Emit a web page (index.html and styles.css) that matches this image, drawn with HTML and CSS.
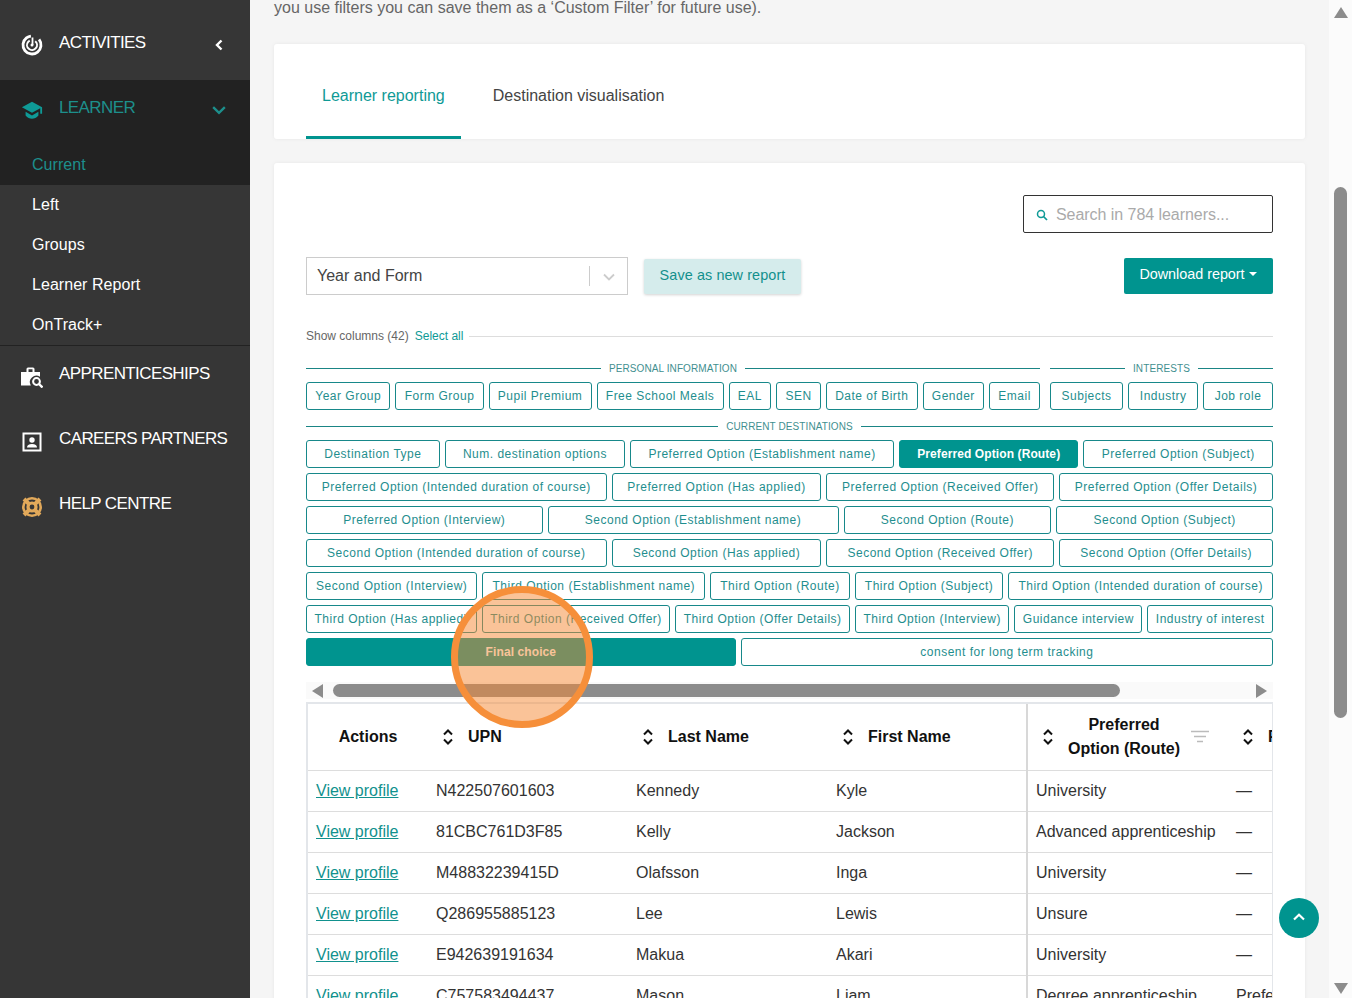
FILE: index.html
```html
<!DOCTYPE html>
<html lang="en">
<head>
    <meta charset="UTF-8">
    <meta name="viewport" content="width=device-width, initial-scale=1.0">
    <title>Learner reporting</title>
    <link rel="stylesheet" href="styles.css">
</head>
<body>
    <div class="app">
        <nav class="sidebar">
            <a class="nav-item first">
                <svg class="nav-icon" viewBox="0 0 22 22"><circle cx="11" cy="11" r="9" fill="none" stroke="#fff" stroke-width="2.800" stroke-dasharray="47 9.500" transform="rotate(-38 11 11)"/><circle cx="11" cy="11" r="5" fill="none" stroke="#fff" stroke-width="2" stroke-dasharray="25 6.400" transform="rotate(-50 11 11)"/><circle cx="11" cy="11" r="1.500" fill="#fff"/><path d="M11.500 11V3.500" stroke="#fff" stroke-width="1.800"/></svg>
                <span class="nav-label">ACTIVITIES</span>
                <svg class="nav-chev" viewBox="0 0 12 12"><path d="M8.500 1.500 4 6 8.500 10.500" fill="none" stroke="#fff" stroke-width="2.400"/></svg>
            </a>
            <div class="nav-open">
                <a class="nav-item learner">
                    <svg class="nav-icon" viewBox="0 0 24 22"><path d="M12 2 1 8l11 6 9-5v6h2V8z" fill="#0f9a96"/><path d="M5 13v4c2 2.500 4.500 3.500 7 3.500s5-1 7-3.500v-4l-7 4z" fill="#0f9a96"/></svg>
                    <span class="nav-label">LEARNER</span>
                    <svg class="nav-chev" viewBox="0 0 12 12"><path d="M1 3.500 6 8.500 11 3.500" fill="none" stroke="#1d8f8c" stroke-width="2"/></svg>
                </a>
                <a class="sub-item current">Current</a>
            </div>
            <a class="sub-item">Left</a>
            <a class="sub-item">Groups</a>
            <a class="sub-item">Learner Report</a>
            <a class="sub-item">OnTrack+</a>
            <div class="nav-rule"></div>
            <a class="nav-item tall">
                <svg class="nav-icon" viewBox="0 0 22 22"><path d="M0 6h5.500V3q0-1.500 1.500-1.500h5Q13.500 1.500 13.500 3v3H19v4.800A6.500 6.500 0 0 0 9.800 19.500H0zM7.500 3.200V6h4V3.200z" fill="#fff"/><circle cx="15.500" cy="15.500" r="3.400" fill="none" stroke="#fff" stroke-width="2"/><path d="m18 18 3.500 3.500" stroke="#fff" stroke-width="2.400"/></svg>
                <span class="nav-label">APPRENTICESHIPS</span>
            </a>
            <a class="nav-item tall">
                <svg class="nav-icon" viewBox="0 0 22 22"><rect x="2.500" y="2.500" width="17" height="17" fill="none" stroke="#fff" stroke-width="2"/><circle cx="11" cy="9" r="2.700" fill="#fff"/><path d="M6 16.500q0-3.500 5-3.500t5 3.500z" fill="#fff"/></svg>
                <span class="nav-label">CAREERS PARTNERS</span>
            </a>
            <a class="nav-item tall">
                <svg class="nav-icon" viewBox="0 0 22 22"><circle cx="11" cy="11" r="10" fill="#e2a95a"/><circle cx="11" cy="11" r="6.500" fill="none" stroke="#363636" stroke-width="1.800"/><path d="m3 3 16 16M19 3 3 19" stroke="#e2a95a" stroke-width="4"/><circle cx="11" cy="11" r="3.800" fill="#e2a95a"/><circle cx="11" cy="11" r="2.400" fill="#363636"/></svg>
                <span class="nav-label">HELP CENTRE</span>
            </a>
        </nav>

        <main class="main">
            <p class="intro">you use filters you can save them as a ‘Custom Filter’ for future use).</p>

            <div class="card tabs">
                <a class="tab active">Learner reporting</a>
                <a class="tab">Destination visualisation</a>
            </div>

            <div class="card report">
                <div class="search-row">
                    <div class="search">
                        <svg class="search-icon" viewBox="0 0 12 12"><circle cx="5" cy="5" r="3.500" fill="none" stroke="#0f9a96" stroke-width="1.500"/><path d="m7.500 7.500 3.500 3.500" stroke="#0f9a96" stroke-width="1.700"/></svg>
                        <span>Search in 784 learners...</span>
                    </div>
                </div>

                <div class="report-row">
                    <div class="select">
                        <span class="select-value">Year and Form</span>
                        <span class="select-sep"></span>
                        <svg class="select-chev" viewBox="0 0 12 8"><path d="M1 1.500 6 6.500 11 1.500" fill="none" stroke="#ccc" stroke-width="1.800"/></svg>
                    </div>
                    <button class="btn-save" type="button">Save as new report</button>
                    <button class="btn-download" type="button">Download report<i class="caret"></i></button>
                </div>

                <div class="columns-head">
                    <span>Show columns (42)</span>
                    <a>Select all</a>
                    <i class="line"></i>
                </div>

                <div class="top-groups">
                    <div class="group personal">
                        <div class="legend">PERSONAL INFORMATION</div>
                        <div class="chip-row">
                            <span class="chip">Year Group</span>
                            <span class="chip">Form Group</span>
                            <span class="chip">Pupil Premium</span>
                            <span class="chip">Free School Meals</span>
                            <span class="chip">EAL</span>
                            <span class="chip">SEN</span>
                            <span class="chip">Date of Birth</span>
                            <span class="chip">Gender</span>
                            <span class="chip">Email</span>
                        </div>
                    </div>
                    <div class="group interests">
                        <div class="legend">INTERESTS</div>
                        <div class="chip-row">
                            <span class="chip">Subjects</span>
                            <span class="chip">Industry</span>
                            <span class="chip">Job role</span>
                        </div>
                    </div>
                </div>

                <div class="legend legend-current">CURRENT DESTINATIONS</div>
                <div class="chip-rows">
                    <div class="chip-row">
                        <span class="chip">Destination Type</span>
                        <span class="chip">Num. destination options</span>
                        <span class="chip">Preferred Option (Establishment name)</span>
                        <span class="chip on">Preferred Option (Route)</span>
                        <span class="chip">Preferred Option (Subject)</span>
                    </div>
                    <div class="chip-row">
                        <span class="chip">Preferred Option (Intended duration of course)</span>
                        <span class="chip">Preferred Option (Has applied)</span>
                        <span class="chip">Preferred Option (Received Offer)</span>
                        <span class="chip">Preferred Option (Offer Details)</span>
                    </div>
                    <div class="chip-row">
                        <span class="chip">Preferred Option (Interview)</span>
                        <span class="chip">Second Option (Establishment name)</span>
                        <span class="chip">Second Option (Route)</span>
                        <span class="chip">Second Option (Subject)</span>
                    </div>
                    <div class="chip-row">
                        <span class="chip">Second Option (Intended duration of course)</span>
                        <span class="chip">Second Option (Has applied)</span>
                        <span class="chip">Second Option (Received Offer)</span>
                        <span class="chip">Second Option (Offer Details)</span>
                    </div>
                    <div class="chip-row">
                        <span class="chip">Second Option (Interview)</span>
                        <span class="chip">Third Option (Establishment name)</span>
                        <span class="chip">Third Option (Route)</span>
                        <span class="chip">Third Option (Subject)</span>
                        <span class="chip">Third Option (Intended duration of course)</span>
                    </div>
                    <div class="chip-row">
                        <span class="chip">Third Option (Has applied)</span>
                        <span class="chip">Third Option (Received Offer)</span>
                        <span class="chip">Third Option (Offer Details)</span>
                        <span class="chip">Third Option (Interview)</span>
                        <span class="chip">Guidance interview</span>
                        <span class="chip">Industry of interest</span>
                    </div>
                    <div class="chip-row">
                        <span class="chip on">Final choice</span>
                        <span class="chip">consent for long term tracking</span>
                    </div>
                </div>

                <div class="hscroll">
                    <i class="arrow-left"></i>
                    <div class="hscroll-thumb"></div>
                    <i class="arrow-right"></i>
                </div>

                <div class="table-wrap">
                    <table class="learners">
                        <colgroup>
                            <col class="col-actions"><col class="col-std"><col class="col-std"><col class="col-first"><col class="col-pref"><col class="col-std">
                        </colgroup>
                        <thead>
                            <tr>
                                <th class="th-actions">Actions</th>
                                <th><div class="th-in"><svg class="sort" viewBox="0 0 12 18"><path d="M2 6.500 6 2.500 10 6.500M2 11.500 6 15.500 10 11.500" fill="none" stroke="#111" stroke-width="2"/></svg>UPN</div></th>
                                <th><div class="th-in"><svg class="sort" viewBox="0 0 12 18"><path d="M2 6.500 6 2.500 10 6.500M2 11.500 6 15.500 10 11.500" fill="none" stroke="#111" stroke-width="2"/></svg>Last Name</div></th>
                                <th class="split"><div class="th-in"><svg class="sort" viewBox="0 0 12 18"><path d="M2 6.500 6 2.500 10 6.500M2 11.500 6 15.500 10 11.500" fill="none" stroke="#111" stroke-width="2"/></svg>First Name</div></th>
                                <th><div class="th-in"><svg class="sort" viewBox="0 0 12 18"><path d="M2 6.500 6 2.500 10 6.500M2 11.500 6 15.500 10 11.500" fill="none" stroke="#111" stroke-width="2"/></svg><span class="th-two">Preferred<br>Option (Route)</span><svg class="filter" viewBox="0 0 18 14"><path d="M0 1.500h18M3 6.500h12M6 11.500h6" stroke="#bbb" stroke-width="1.500"/></svg></div></th>
                                <th><div class="th-in"><svg class="sort" viewBox="0 0 12 18"><path d="M2 6.500 6 2.500 10 6.500M2 11.500 6 15.500 10 11.500" fill="none" stroke="#111" stroke-width="2"/></svg>Preferred</div></th>
                            </tr>
                        </thead>
                        <tbody>
                            <tr><td><a>View profile</a></td><td>N422507601603</td><td>Kennedy</td><td class="split">Kyle</td><td>University</td><td>—</td></tr>
                            <tr><td><a>View profile</a></td><td>81CBC761D3F85</td><td>Kelly</td><td class="split">Jackson</td><td>Advanced apprenticeship</td><td>—</td></tr>
                            <tr><td><a>View profile</a></td><td>M48832239415D</td><td>Olafsson</td><td class="split">Inga</td><td>University</td><td>—</td></tr>
                            <tr><td><a>View profile</a></td><td>Q286955885123</td><td>Lee</td><td class="split">Lewis</td><td>Unsure</td><td>—</td></tr>
                            <tr><td><a>View profile</a></td><td>E942639191634</td><td>Makua</td><td class="split">Akari</td><td>University</td><td>—</td></tr>
                            <tr><td><a>View profile</a></td><td>C757583494437</td><td>Mason</td><td class="split">Liam</td><td>Degree apprenticeship</td><td>Preferred</td></tr>
                        </tbody>
                    </table>
                </div>
            </div>
        </main>

        <aside class="page-scroll">
            <i class="arrow-up"></i>
            <div class="page-thumb"></div>
            <i class="arrow-down"></i>
        </aside>
    </div>

    <!-- highlight from the walkthrough tool -->
    <div class="spotlight"></div>
    <button class="to-top" type="button"><svg viewBox="0 0 12 8"><path d="M1 6.500 6 1.800 11 6.500" fill="none" stroke="#fff" stroke-width="2.200"/></svg></button>
</body>
</html>
```

FILE: styles.css
```css
* { box-sizing: border-box; }
html, body { margin: 0; padding: 0; height: 998px; overflow: hidden; }
body { font-family: "Liberation Sans", Arial, sans-serif; color: #333; background: #f5f5f5; position: relative; }
.app { display: flex; height: 998px; overflow: hidden; }

/* sidebar */
.sidebar { width: 250px; flex: none; background: #363636; color: #fff; }
.nav-item { display: flex; align-items: center; height: 80px; padding: 0 25px 0 21px; }
.nav-item.first { padding-top: 6px; }
.nav-item.first .nav-icon, .nav-item.first .nav-chev { margin-top: 4px; }
.nav-item.tall { height: 65px; }
.nav-icon { width: 22px; height: 22px; flex: none; margin-top: 6px; }
.nav-label { margin-left: 16px; font-size: 17px; letter-spacing: -0.6px; white-space: nowrap; flex: 1; }
.nav-chev { width: 12px; height: 12px; flex: none; margin-top: 6px; }
.nav-open { background: #222; height: 105px; }
.nav-open .nav-item { height: 55px; }
.learner .nav-label { color: #1d8f8c; }
.learner .nav-icon { margin-top: 4px; }
.learner .nav-chev { width: 14px; height: 14px; margin: 4px -1px 0 0; }
.sub-item { display: block; height: 40px; line-height: 40px; padding-left: 32px; font-size: 16px; letter-spacing: 0.05px; }
.sub-item.current { color: #1d8f8c; margin-top: 10px; }
.nav-rule { height: 1px; background: #222; margin-bottom: -5px; }

/* main column */
.main { width: 1079px; flex: none; padding: 0 24px; }
.intro { margin: -3px 0 0; height: 22px; line-height: 22px; font-size: 16px; color: #666; }
.card { background: #fff; border-radius: 3px; box-shadow: 0 0 4px rgba(0, 0, 0, 0.06); }
.tabs { display: flex; height: 95px; margin-top: 25px; padding-left: 32px; }
.tab { display: flex; align-items: center; padding: 12px 16px 0; font-size: 16px; color: #444; border-bottom: 3px solid transparent; }
.tab + .tab { margin-left: 16px; }
.tab.active { color: #0f9a96; border-bottom-color: #00948f; }
.report { margin-top: 24px; padding: 32px; height: 900px; }

.search-row { display: flex; justify-content: flex-end; }
.search { width: 250px; height: 38px; border: 1px solid #333; border-radius: 2px; display: flex; align-items: center; padding: 1px 0 0 12px; font-size: 16px; letter-spacing: -0.05px; color: #aaa; }
.search-icon { width: 12px; height: 12px; margin-right: 8px; }

.report-row { display: flex; align-items: center; height: 38px; margin-top: 24px; }
.select { width: 322px; height: 38px; border: 1px solid #ccc; display: flex; align-items: center; padding-left: 10px; font-size: 16px; color: #444; }
.select-value { flex: 1; }
.select-sep { width: 1px; height: 20px; background: #ccc; }
.select-chev { width: 12px; height: 8px; margin: 1px 12px 0 13px; }
.btn-save { margin: 1px 0 0 16px; width: 157px; height: 35px; padding: 0 0 4px; border: 0; border-radius: 2px; background: #d5ecec; color: #12908c; font: 14.4px "Liberation Sans", Arial, sans-serif; letter-spacing: 0.1px; box-shadow: 0 1px 3px rgba(0, 0, 0, 0.18); }
.btn-download { margin-left: auto; width: 149px; height: 36px; padding: 0 1px 5px 0; border: 0; border-radius: 2px; background: #00948f; color: #fff; font: 14.4px "Liberation Sans", Arial, sans-serif; letter-spacing: -0.03px; }
.caret { display: inline-block; margin-left: 4px; vertical-align: 3px; border: 4px solid transparent; border-top-color: #fff; border-bottom: 0; }

.columns-head { display: flex; align-items: center; height: 18px; margin-top: 32px; font-size: 12px; color: #666; }
.columns-head a { color: #0f9a96; margin-left: 6px; }
.columns-head .line { flex: 1; height: 1px; background: #ddd; margin-left: 6px; }

.top-groups { display: flex; gap: 10px; margin-top: 14px; }
.personal { width: 734px; }
.interests { width: 223px; }
.legend { display: flex; align-items: center; gap: 8px; height: 18px; font-size: 10px; letter-spacing: 0.1px; color: #3f8f8f; margin-bottom: 5px; }
.legend::before, .legend::after { content: ""; flex: 1; height: 1px; background: #1a8585; }
.legend-current { margin-top: 7px; margin-bottom: 5px; }

.chip-rows { display: flex; flex-direction: column; gap: 5px; }
.chip-row { display: flex; gap: 5px; }
.chip { flex: 1 1 auto; height: 28px; line-height: 26px; padding: 0 7px; text-align: center; white-space: nowrap; border: 1px solid #17888a; border-radius: 3px; font-size: 12px; letter-spacing: 0.5px; color: #1f8e8e; }
.chip.on { background: #00948f; border-color: #00948f; color: #fff; font-weight: bold; letter-spacing: 0.1px; }

.hscroll { display: flex; align-items: center; height: 17px; margin-top: 16px; background: #fafafa; padding: 0 6px; }
.hscroll-thumb { width: 787px; height: 13px; border-radius: 7px; background: #8c8c8c; margin-left: 10px; }
.arrow-left { border: 7px solid transparent; border-right: 11px solid #8c8c8c; border-left: 0; }
.arrow-right { margin-left: auto; border: 7px solid transparent; border-left: 11px solid #8c8c8c; border-right: 0; }

.table-wrap { margin-top: 3px; width: 967px; height: 400px; overflow: hidden; border-top: 2px solid #e3e6ea; border-left: 2px solid #e3e6ea; border-right: 1px solid #e3e6ea; }
.learners { border-collapse: collapse; table-layout: fixed; width: 1120px; font-size: 16px; }
.col-actions { width: 120px; }
.col-std { width: 200px; }
.col-first { width: 199px; }
.col-pref { width: 201px; }
.learners th { height: 66px; padding: 0 8px; text-align: left; color: #111; font-weight: bold; border-bottom: 1px solid #ddd; }
.learners td { height: 41px; padding: 0 8px; white-space: nowrap; overflow: hidden; color: #333; border-bottom: 1px solid #ddd; }
.learners td a { color: #11918d; text-decoration: underline; }
.learners .split { border-right: 2px solid #d8d8d8; }
.learners .th-actions { text-align: center; }
.th-in { display: flex; align-items: center; white-space: nowrap; }
.sort { width: 12px; height: 18px; flex: none; margin: 0 14px 0 6px; }
.th-two { text-align: center; line-height: 24px; }
.filter { width: 18px; height: 14px; margin-left: 11px; flex: none; }

/* fake page scrollbar */
.page-scroll { flex: 1; background: #fbfbfb; display: flex; flex-direction: column; align-items: center; padding: 7px 0 4px; }
.page-thumb { width: 13px; height: 531px; border-radius: 7px; background: #8c8c8c; margin-top: 169px; }
.arrow-up { border: 7px solid transparent; border-bottom: 11px solid #8c8c8c; border-top: 0; }
.arrow-down { margin-top: auto; border: 7px solid transparent; border-top: 11px solid #8c8c8c; border-bottom: 0; }

.spotlight { position: absolute; left: 451px; top: 586px; width: 142px; height: 142px; border-radius: 50%; border: 7px solid #f68f3a; background: rgba(245, 135, 50, 0.5); }
.to-top { position: absolute; left: 1279px; top: 898px; width: 40px; height: 40px; padding: 0 0 2px; border: 0; border-radius: 50%; background: #00948f; display: flex; align-items: center; justify-content: center; }
.to-top svg { width: 12px; height: 8px; }
```
